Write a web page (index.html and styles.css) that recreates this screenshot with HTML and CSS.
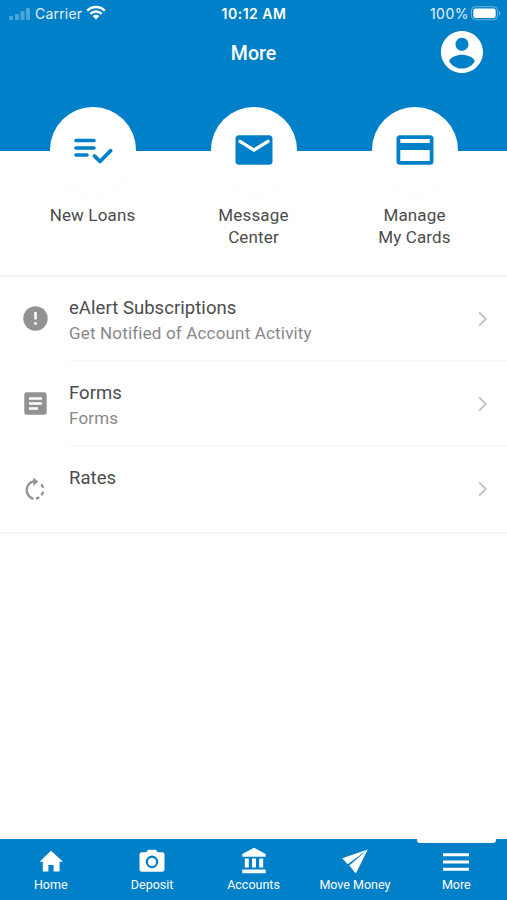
FILE: index.html
```html
<!DOCTYPE html>
<html lang="en">

<head>
    <meta charset="UTF-8">
    <meta name="viewport" content="width=device-width, initial-scale=1.0">
    <title>More</title>
    <link rel="stylesheet" href="styles.css">
</head>

<body>
    <header class="header">
        <div class="status-bar">
            <div class="status-left">
                <svg class="signal" width="22" height="14" viewBox="0 0 22 14">
                    <rect x="0" y="9" width="4" height="4" rx="1"/>
                    <rect x="6" y="7" width="4" height="6" rx="1"/>
                    <rect x="11.5" y="4" width="4" height="9" rx="1"/>
                    <rect x="17" y="1" width="4" height="12" rx="1"/>
                </svg>
                <span class="carrier">Carrier</span>
                <svg class="wifi" width="20" height="15" viewBox="0 0 20 15">
                    <path d="M1.3 5.6a12.4 12.4 0 0 1 17.4 0M4.4 8.8a8 8 0 0 1 11.2 0" fill="none" stroke="#fff" stroke-width="2.4"/>
                    <path d="M10 14.4l-3.4-3.4a4.9 4.9 0 0 1 6.8 0z" fill="#fff"/>
                </svg>
            </div>
            <div class="status-time">10:12 AM</div>
            <div class="status-right">
                <span class="percent">100%</span>
                <svg class="battery" width="30" height="15" viewBox="0 0 30 15">
                    <rect x="0.5" y="0.7" width="26" height="13" rx="3.8" fill="none" stroke="#fff" stroke-opacity="0.4"/>
                    <rect x="2.3" y="2.5" width="22.4" height="9.4" rx="2.2" fill="#fff"/>
                    <path d="M28 5v4.5c1.8-.7 1.8-3.8 0-4.5z" fill="#fff" fill-opacity="0.5"/>
                </svg>
            </div>
        </div>
        <div class="title-bar">
            <h1>More</h1>
            <svg class="avatar" viewBox="2 2 20 20">
                <path d="M12 2C6.480 2 2 6.480 2 12s4.480 10 10 10 10-4.480 10-10S17.520 2 12 2zm0 3.200c1.700 0 3.100 1.400 3.100 3.100s-1.400 3.100-3.100 3.100-3.100-1.400-3.100-3.100 1.400-3.100 3.100-3.100zm0 14.700c-2.500 0-4.750-1.350-6.100-3.400.05-2 4.050-3.200 6.100-3.200s6.050 1.200 6.100 3.200c-1.350 2.050-3.600 3.400-6.100 3.400z"/>
            </svg>
        </div>
    </header>

    <section class="shortcuts">
        <a class="shortcut">
            <span class="circle">
                <svg width="40" height="30" viewBox="0 0 40 30" fill="none" stroke="#0080c8" stroke-width="3.6" stroke-linecap="round" stroke-linejoin="round">
                    <path d="M3 5.500h18M3 13h18M3 20h11"/>
                    <path d="M21.500 21l5.500 5.500 10.500-10.800" stroke-width="3.800"/>
                </svg>
            </span>
            <span class="label">New Loans</span>
        </a>
        <a class="shortcut">
            <span class="circle">
                <svg width="38" height="30" viewBox="0 0 38 30">
                    <rect x="0.500" y="0.300" width="37" height="29.400" rx="3.500" fill="#0080c8"/>
                    <path d="M5 6.300l14 8.700 14-8.700" fill="none" stroke="#fff" stroke-width="3.200" stroke-linecap="round"/>
                </svg>
            </span>
            <span class="label">Message<br>Center</span>
        </a>
        <a class="shortcut">
            <span class="circle">
                <svg width="38" height="30" viewBox="0 0 38 30">
                    <rect x="0.500" y="0.300" width="37" height="29.400" rx="3.500" fill="#0080c8"/>
                    <path d="M4.300 4h29.400v4H4.300zM4.300 15h29.400v11H4.300z" fill="#fff"/>
                </svg>
            </span>
            <span class="label">Manage<br>My Cards</span>
        </a>
    </section>

    <main class="menu">
        <a class="menu-item">
            <span class="menu-icon">
                <svg width="25" height="25" viewBox="0 0 25 25">
                    <circle cx="12.500" cy="12.500" r="12.200" fill="#929292"/>
                    <path d="M12.500 6v7.500M12.500 16.200v2.500" stroke="#fff" stroke-width="2.500"/>
                </svg>
            </span>
            <span class="menu-body">
                <span class="menu-text">
                    <span class="menu-title">eAlert Subscriptions</span>
                    <span class="menu-sub">Get Notified of Account Activity</span>
                </span>
                <svg class="chevron" viewBox="0 0 10 16"><path d="M1.200 1.400L7.800 8l-6.600 6.600"/></svg>
            </span>
        </a>
        <a class="menu-item">
            <span class="menu-icon">
                <svg width="23" height="23" viewBox="0 0 23 23">
                    <rect x="0.300" y="0.300" width="22.400" height="22.400" rx="2.500" fill="#929292"/>
                    <path d="M5 6.500h13M5 11.500h13M5 16.500h9" stroke="#fff" stroke-width="2.400"/>
                </svg>
            </span>
            <span class="menu-body">
                <span class="menu-text">
                    <span class="menu-title">Forms</span>
                    <span class="menu-sub">Forms</span>
                </span>
                <svg class="chevron" viewBox="0 0 10 16"><path d="M1.200 1.400L7.800 8l-6.600 6.600"/></svg>
            </span>
        </a>
        <a class="menu-item">
            <span class="menu-icon">
                <svg width="22" height="24" viewBox="0 0 22 24">
                    <path d="M9.500 21.800A9 9 0 0 1 10 4.200" fill="none" stroke="#929292" stroke-width="2.300"/>
                    <path d="M9.300 0.500v8.400l5-4.500z" fill="#929292"/>
                    <path d="M17.200 7.300a9 9 0 0 1 1.900 3.500M19.100 14.800a9 9 0 0 1-1.700 3.400M15.300 20.200a9 9 0 0 1-3.300 1.600" fill="none" stroke="#929292" stroke-width="2.300"/>
                </svg>
            </span>
            <span class="menu-body">
                <span class="menu-text">
                    <span class="menu-title">Rates</span>
                    <span class="menu-sub"></span>
                </span>
                <svg class="chevron" viewBox="0 0 10 16"><path d="M1.200 1.400L7.800 8l-6.600 6.600"/></svg>
            </span>
        </a>
    </main>

    <nav class="tab-bar">
        <a class="tab">
            <svg width="28" height="28" viewBox="0 0 28 28"><path d="M11.400 24.500v-6.500h5.200v6.500h6v-9.700H26L14 3.800 2.600 14.800h3.200v9.700z"/></svg>
            <span>Home</span>
        </a>
        <a class="tab">
            <svg width="28" height="28" viewBox="0 0 28 28">
                <path fill-rule="evenodd" d="M10.300 2.700L8 5.200H4a2.500 2.500 0 0 0-2.500 2.500v14.600A2.500 2.500 0 0 0 4 24.800h20a2.500 2.500 0 0 0 2.500-2.500V7.700A2.500 2.500 0 0 0 24 5.200h-4l-2.300-2.500zM14 8.600a6.300 6.300 0 1 1 0 12.600 6.300 6.300 0 0 1 0-12.600z"/>
                <circle cx="14" cy="14.900" r="4"/>
            </svg>
            <span>Deposit</span>
        </a>
        <a class="tab">
            <svg width="28" height="28" viewBox="0 0 28 28"><path d="M14 .8L2.300 7v2.700h23.400V7zM4.800 11.500h4v9h-4zM12 11.500h4v9h-4zM19.200 11.500h4v9h-4zM2.300 22.500h23.400v3.800H2.300z"/></svg>
            <span>Accounts</span>
        </a>
        <a class="tab">
            <svg width="28" height="28" viewBox="0 0 28 28"><path d="M26.800 2.500L1.200 11.200l5.500 6zM26.800 2.500L8.300 18.500l6.500 8z"/></svg>
            <span>Move Money</span>
        </a>
        <a class="tab active">
            <svg width="28" height="28" viewBox="0 0 28 28"><path d="M1 6.200h26v3H1zM1 13.500h26v3H1zM1 20.700h26v3H1z"/></svg>
            <span>More</span>
        </a>
    </nav>
</body>

</html>
```
FILE: styles.css
```css
* {
    box-sizing: border-box;
}

body {
    margin: 0;
    height: 100vh;
    display: flex;
    flex-direction: column;
    background-color: #fff;
    font-family: Roboto, Arial, sans-serif;
    overflow: hidden;
}

svg {
    display: block;
}

.header {
    height: 151px;
    flex-shrink: 0;
    background-color: #0080c8;
    color: #fff;
}

.status-bar {
    height: 27px;
    padding: 0 6px 0 9px;
    display: grid;
    grid-template-columns: 1fr auto 1fr;
    align-items: center;
    font-family: Inter, sans-serif;
    font-size: 14px;
}

.status-left,
.status-right {
    display: flex;
    align-items: center;
}

.status-right {
    justify-content: flex-end;
    gap: 2px;
}

.signal {
    fill: #fff;
    opacity: 0.3;
    margin-right: 4px;
}

.carrier {
    opacity: 0.9;
    letter-spacing: 0.2px;
}

.wifi {
    margin-left: 4px;
    margin-top: -3px;
}

.percent {
    opacity: 0.9;
    letter-spacing: 0.5px;
}

.status-time {
    padding-right: 2px;
    font-weight: 600;
    font-size: 14px;
    letter-spacing: 0.5px;
}

.title-bar {
    height: 50px;
    padding: 0 24px;
    display: grid;
    grid-template-columns: 42px 1fr 42px;
    align-items: center;
}

.title-bar h1 {
    grid-column: 2;
    margin: 0;
    padding-top: 2px;
    text-align: center;
    font-size: 19.5px;
    font-weight: 500;
}

.avatar {
    width: 42px;
    height: 42px;
    fill: #fff;
}

.shortcuts {
    height: 168px;
    margin-top: -44px;
    padding: 0 12px;
    display: grid;
    grid-template-columns: repeat(3, 1fr);
    flex-shrink: 0;
}

.shortcut {
    display: flex;
    flex-direction: column;
    align-items: center;
}

.circle {
    width: 86px;
    height: 86px;
    border-radius: 50%;
    background-color: #fff;
    box-shadow: 0 2px 3px rgba(0, 0, 0, 0.01);
    display: flex;
    align-items: center;
    justify-content: center;
}

.label {
    margin-top: 11px;
    text-align: center;
    font-size: 17px;
    line-height: 22px;
    letter-spacing: 0.15px;
    color: #4c4c4c;
}

.menu {
    border-top: 2px solid #f5f5f5;
    border-bottom: 2px solid #f5f5f5;
    flex-shrink: 0;
}

.menu-item {
    height: 85px;
    display: flex;
}

.menu-icon {
    width: 70px;
    padding-bottom: 2px;
    display: flex;
    align-items: center;
    justify-content: center;
}

.menu-body {
    flex: 1;
    padding-right: 19px;
    display: flex;
    align-items: center;
    justify-content: space-between;
    border-bottom: 2px solid #f8f8f8;
}

.menu-item:last-child .menu-body {
    border-bottom-color: transparent;
}

.menu-text {
    padding-top: 4px;
    display: flex;
    flex-direction: column;
}

.menu-title {
    margin-left: -1px;
    font-size: 18.5px;
    line-height: 26px;
    letter-spacing: 0.05px;
    color: #4c4c4c;
}

.menu-sub {
    height: 26px;
    margin-left: -1px;
    font-size: 17px;
    line-height: 25px;
    letter-spacing: 0.17px;
    color: #888;
}

.chevron {
    width: 10px;
    height: 16px;
    fill: none;
    stroke: #c4c4c4;
    stroke-width: 2;
}

.tab-bar {
    height: 61px;
    margin-top: auto;
    display: flex;
    background-color: #0080c8;
    color: #fff;
}

.tab {
    flex: 1;
    padding-top: 8px;
    display: flex;
    flex-direction: column;
    align-items: center;
    position: relative;
    font-size: 12.5px;
    line-height: 19px;
}

.tab svg {
    fill: #fff;
}

/* white marker over the selected tab */
.tab.active::before {
    content: "";
    position: absolute;
    top: 0;
    left: 11px;
    right: 11px;
    height: 3.5px;
    background-color: #fff;
    border-radius: 0 0 3px 3px;
}
```
